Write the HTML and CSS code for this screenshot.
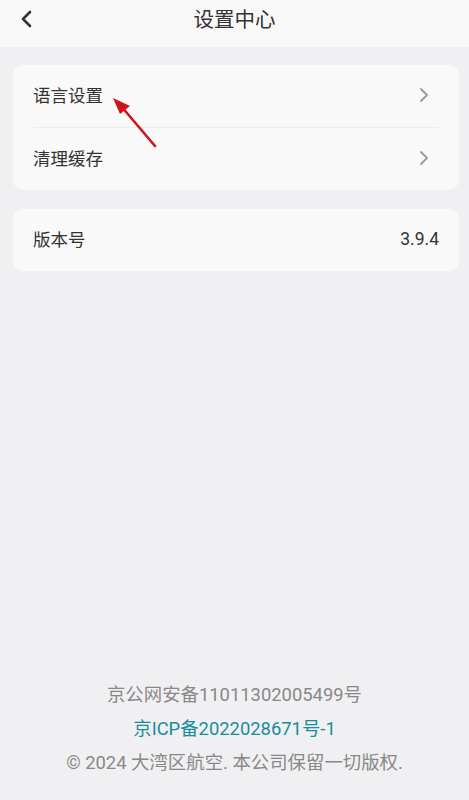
FILE: index.html
```html
<!DOCTYPE html>
<html lang="zh-CN">
<head>
  <meta charset="UTF-8" />
  <meta name="viewport" content="width=device-width, initial-scale=1.0"/>
  <title>设置中心</title>
  <link rel="stylesheet" href="styles.css">
</head>
<body>

  <header class="topbar">
    <button class="back" aria-label="返回">
      <svg width="14" height="18" viewBox="0 0 14 18"><path d="M10 2 L3 9 L10 16" fill="none" stroke="#333" stroke-width="2.6" stroke-linecap="round" stroke-linejoin="round"/></svg>
    </button>
    <h1>设置中心</h1>
  </header>

  <main class="content">
    <section class="card">
      <div class="row">
        <span class="label">语言设置</span>
        <svg class="chev" width="10" height="16" viewBox="0 0 10 16"><path d="M2 2 L8 8 L2 14" fill="none" stroke="#9a9a9a" stroke-width="1.8" stroke-linecap="round" stroke-linejoin="round"/></svg>
      </div>
      <div class="row">
        <span class="label">清理缓存</span>
        <svg class="chev" width="10" height="16" viewBox="0 0 10 16"><path d="M2 2 L8 8 L2 14" fill="none" stroke="#9a9a9a" stroke-width="1.8" stroke-linecap="round" stroke-linejoin="round"/></svg>
      </div>

      <!-- annotation arrow -->
      <svg class="pointer" width="60" height="60" viewBox="0 0 60 60">
        <line x1="52" y1="54" x2="18" y2="14" stroke="#d0121b" stroke-width="2.6" stroke-linecap="round"/>
        <polygon points="10,6 27,14 17,22" fill="#d0121b"/>
      </svg>
    </section>

    <section class="card">
      <div class="row">
        <span class="label">版本号</span>
        <span class="value">3.9.4</span>
      </div>
    </section>
  </main>

  <footer class="footer">
    <p>京公网安备11011302005499号</p>
    <p class="icp">京ICP备2022028671号-1</p>
    <p>© 2024 大湾区航空. 本公司保留一切版权.</p>
  </footer>

</body>
</html>
```

FILE: styles.css
```css
body {
  margin: 0;
  font-family: Roboto, "Noto Sans CJK SC", sans-serif;
  background: #f0f0f2;
  color: #333;
  height: 800px;
  display: flex;
  flex-direction: column;
}

.topbar {
  height: 47px;
  background: #f8f8f8;
  display: flex;
  justify-content: center;
  position: relative;
}

.topbar h1 {
  margin: 0;
  padding-top: 6px;
  font-size: 20.5px;
  line-height: 28px;
  font-weight: 400;
  color: #333;
}

.back {
  position: absolute;
  left: 20px;
  top: 7px;
  background: none;
  border: none;
  padding: 0;
  width: 24px;
  height: 24px;
  display: flex;
  align-items: center;
}

.content {
  padding: 18px 10px 0 13px;
  display: flex;
  flex-direction: column;
  gap: 19px;
  flex: 1;
}

.card {
  background: #f9f9f9;
  border-radius: 10px;
  padding: 0 20px;
  position: relative;
}

.row {
  height: 62px;
  display: flex;
  align-items: center;
  justify-content: space-between;
}

.row + .row {
  border-top: 1px solid #ececec;
}

.label {
  font-size: 17.5px;
  margin-top: -3px;
}

.value {
  font-size: 17.5px;
  margin-top: -3px;
}

.chev {
  margin-right: 10px;
  margin-top: -3px;
}

.pointer {
  position: absolute;
  left: 90px;
  top: 27px;
}

.footer {
  padding-bottom: 20px;
  text-align: center;
  font-size: 18.4px;
  color: #888;
}

.footer p {
  margin: 0;
  line-height: 34px;
}

.footer .icp {
  color: #1a8c9c;
}
```
